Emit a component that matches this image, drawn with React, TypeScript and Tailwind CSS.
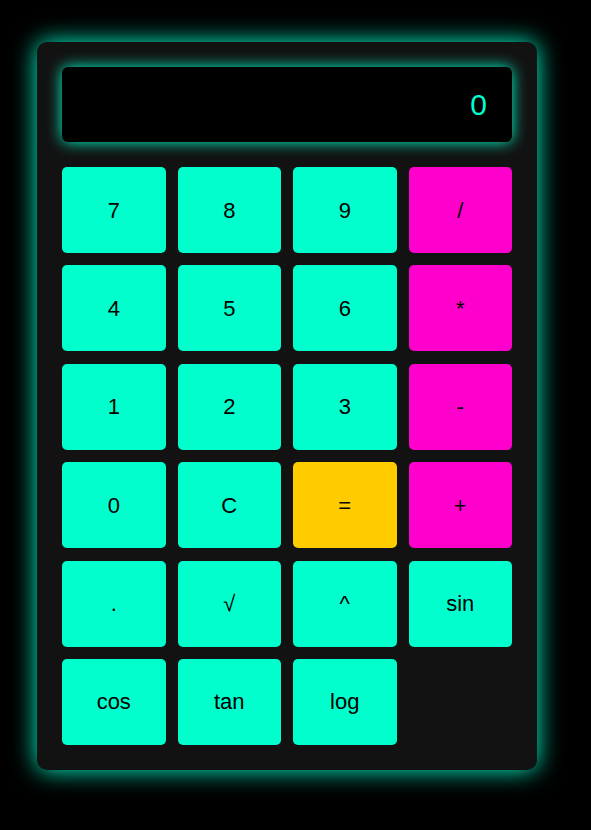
const keys = [
  { label: "7", color: "bg-[#00ffcc]" },
  { label: "8", color: "bg-[#00ffcc]" },
  { label: "9", color: "bg-[#00ffcc]" },
  { label: "/", color: "bg-[#ff00cc]" },
  { label: "4", color: "bg-[#00ffcc]" },
  { label: "5", color: "bg-[#00ffcc]" },
  { label: "6", color: "bg-[#00ffcc]" },
  { label: "*", color: "bg-[#ff00cc]" },
  { label: "1", color: "bg-[#00ffcc]" },
  { label: "2", color: "bg-[#00ffcc]" },
  { label: "3", color: "bg-[#00ffcc]" },
  { label: "-", color: "bg-[#ff00cc]" },
  { label: "0", color: "bg-[#00ffcc]" },
  { label: "C", color: "bg-[#00ffcc]" },
  { label: "=", color: "bg-[#ffcc00]" },
  { label: "+", color: "bg-[#ff00cc]" },
  { label: ".", color: "bg-[#00ffcc]" },
  { label: "√", color: "bg-[#00ffcc]" },
  { label: "^", color: "bg-[#00ffcc]" },
  { label: "sin", color: "bg-[#00ffcc]" },
  { label: "cos", color: "bg-[#00ffcc]" },
  { label: "tan", color: "bg-[#00ffcc]" },
  { label: "log", color: "bg-[#00ffcc]" },
]

export default function App() {
  return (
    <div className="min-h-[830px] bg-black pt-[42px] pl-[37px] font-['Liberation_Sans',Arial,sans-serif]">
      <div className="w-[500px] rounded-[10px] bg-[#121212] p-[25px] shadow-[0_0_25px_#00ffcc]">
        <div className="h-[75px] rounded-[6px] bg-black pr-[25px] flex items-center justify-end text-[30px] text-[#00ffcc] shadow-[0_0_15px_#00ffcc]">
          0
        </div>
        <div className="mt-[25px] grid grid-cols-4 gap-x-[12px] gap-y-[12.4px]">
          {keys.map((k) => (
            <button
              key={k.label}
              className={`${k.color} h-[86px] rounded-[5px] text-[22px] text-black flex items-center justify-center`}
            >
              {k.label}
            </button>
          ))}
        </div>
      </div>
    </div>
  )
}
